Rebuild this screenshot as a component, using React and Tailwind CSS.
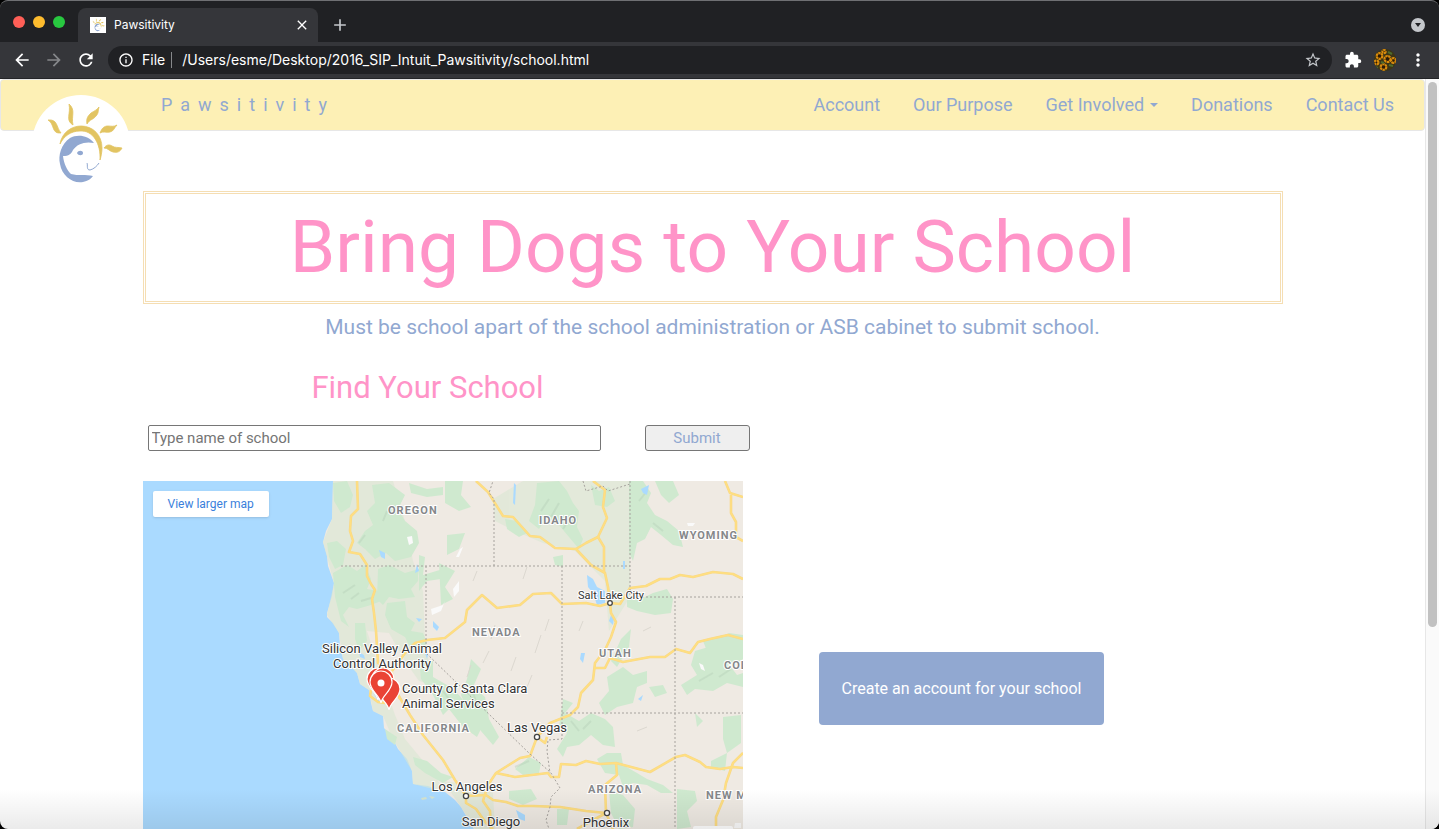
import { MdArrowBack, MdArrowForward, MdRefresh, MdInfoOutline, MdStarBorder, MdExtension, MdMoreVert, MdClose, MdAdd } from "react-icons/md";

function LogoArt() {
  return (
    <>
      <g fill="#e2c462" stroke="#e2c462" strokeWidth="0.8" strokeLinejoin="round">
        <path d="M29 50C31 38 41 32 50 32C62 32 71 41 71 54C71 58 70 63 69 66C70 50 62 36 49 37C40 37 33 42 29 50Z" />
        <path d="M17 26C27 25 25 33 30 39C20 40 24 30 17 26Z" />
        <path d="M38 10C45 16 40 22 42 31C34 26 40 20 38 10Z" />
        <path d="M68 13C67 16 68 19 65 22C62 26 59 25 56 30C55 24 57 22 60 19C63 17 66 16 68 13Z" />
        <path d="M86 31C83 34 83 37 79 38C75 39 72 37 69 39C71 34 73 32 77 32C80 32 83 33 86 31Z" />
        <path d="M91 54C87 53 84 54 81 52C78 50 75 51 73 54C77 54 78 57 82 58C86 59 89 58 91 54Z" />
      </g>
      <g fill="#91a8d1">
        <path d="M63 49C57 41 46 40 39 44C30 50 27 62 29 70C31 82 42 90 52 88C57 87 60 85 62 82C55 80 47 82 40 80C36 76 33 70 32 62C38 62 40 60 42 56C46 50 54 47 63 49Z" />
        <path d="M46 59C47 56 52 56 52 59C52 62 47 62 46 59Z" />
      </g>
      <path d="M56 69C57 71 55 76 59 76C63 75 66 72 68 69" fill="none" stroke="#91a8d1" strokeWidth="1" />
    </>
  );
}

function BrowserChrome() {
  return (
    <header className="shrink-0 rounded-t-lg border-t border-[#6f7073] bg-[#202124] font-[Inter,sans-serif] text-white">
      <div className="flex h-[41px] items-end pr-[14px]">
        <div className="flex gap-2 self-center px-[13px]">
          <span className="size-3 rounded-full bg-[#ff5f57]" />
          <span className="size-3 rounded-full bg-[#febc2e]" />
          <span className="size-3 rounded-full bg-[#28c840]" />
        </div>
        <div className="flex h-[34px] w-60 items-center rounded-t-lg bg-[#35363a] px-3 text-xs">
          <svg viewBox="0 0 100 100" className="mr-2 size-4 bg-white"><LogoArt /></svg>
          <span className="flex-1">Pawsitivity</span>
          <button aria-label="Close tab"><MdClose className="-mr-1 size-4" /></button>
        </div>
        <button aria-label="New tab" className="ml-3 flex h-[34px] items-center text-[#c4c7cb]"><MdAdd className="size-5" /></button>
        <button aria-label="Search tabs" className="mb-[10px] ml-auto flex size-[14px] items-center justify-center rounded-full bg-[#c4c7cb]">
          <svg viewBox="0 0 8 6" className="w-2"><path d="M1 1h6L4 5Z" fill="#202124" /></svg>
        </button>
      </div>
      <div className="flex h-[37px] items-center gap-3 border-b border-[#242528] bg-[#35363a] pr-[15px] pl-3">
        <button aria-label="Back"><MdArrowBack className="size-5" /></button>
        <button aria-label="Forward" className="text-[#86888b]"><MdArrowForward className="size-5" /></button>
        <button aria-label="Reload"><MdRefresh className="size-5" /></button>
        <div className="flex h-7 flex-1 items-center rounded-full bg-[#202124] px-[10px] text-sm">
          <MdInfoOutline className="size-4" />
          <span className="ml-2 border-r border-[#86888b] pr-[6px] leading-4">File</span>
          <input aria-label="Address" defaultValue="/Users/esme/Desktop/2016_SIP_Intuit_Pawsitivity/school.html" className="ml-[10px] min-w-0 flex-1 bg-transparent outline-none" />
          <button aria-label="Bookmark"><MdStarBorder className="size-[18px] text-[#c4c7cb]" /></button>
        </div>
        <button aria-label="Extensions"><MdExtension className="size-[18px]" /></button>
        <button aria-label="Profile">
          <svg viewBox="0 0 22 22" className="size-[22px] rounded-full bg-[#3d3516]">
            <g fill="#2b1a07" stroke="#d98b0c" strokeWidth="2.2" strokeDasharray="2.4 0.5">
              <circle cx="5.5" cy="7" r="2.8" />
              <circle cx="13.5" cy="10" r="3" />
              <circle cx="9.5" cy="18" r="2.8" />
              <circle cx="19.5" cy="11.5" r="2.4" />
              <circle cx="2.5" cy="13.5" r="2" />
              <circle cx="10" cy="2.5" r="1.6" />
            </g>
            <path d="M14 3l4 2M7 13l3 1M15 16l4 1M1 18l3 1" stroke="#4f6b2c" strokeWidth="2" />
          </svg>
        </button>
        <button aria-label="Menu" className="-mr-1"><MdMoreVert className="size-5" /></button>
      </div>
    </header>
  );
}

const forests = [
  "190,2 204,0 210,14 207,26 198,32 191,20",
  "229,4 246,2 262,14 255,28 262,40 274,50 276,62 268,76 252,80 243,72 232,78 222,68 214,62 222,50 230,44 224,30 232,22",
  "184,62 194,60 203,68 200,84 192,88 186,76",
  "190,92 204,84 214,90 222,84 228,98 224,108 236,110 238,120 228,124 214,128 206,126 200,134 206,146 198,140 192,116",
  "235,88 246,84 262,92 276,88 275,100 268,108 272,116 256,118 246,116 240,124 234,118",
  "244,122 262,120 264,136 272,142 268,150 280,152 284,162 276,172 268,168 262,156 248,148 242,134",
  "212,142 222,142 224,160 216,170 212,158",
  "266,2 284,8 300,6 300,14 284,16 268,12",
  "276,74 282,76 280,94 300,88 298,98 284,100 276,110",
  "276,178 290,180 290,196 304,204 316,214 330,232 338,248 334,256 320,246 306,228 300,234 290,214 278,198",
  "296,82 312,90 302,106 310,118 298,124",
  "302,0 320,0 318,14 328,26 316,30 302,22",
  "304,54 322,52 316,68 304,74",
  "394,2 416,0 424,10 430,22 436,30 434,46 440,58 436,68 426,56 416,44 404,36 396,48 386,40 392,24",
  "448,4 456,10 466,6 472,20 464,26 452,24",
  "486,0 500,0 508,12 504,22 512,34 524,40 536,50 540,66 530,64 518,54 508,46 502,58 494,62 490,80 486,72",
  "512,0 530,0 536,14 526,22 518,14",
  "410,76 420,74 420,86 412,84",
  "484,118 498,118 510,112 524,108 530,118 528,132 512,134 494,130 484,126",
  "478,158 488,148 486,166 474,186 468,180",
  "464,196 480,186 490,194 504,190 504,202 494,206 490,222 474,226 462,234 456,222 466,210",
  "506,206 520,204 524,212 512,216",
  "552,170 572,164 586,152 600,154 600,178 588,186 594,194 600,192 600,206 584,202 570,210 552,208 544,214 538,204 554,194 548,184",
  "560,160 580,154 584,162 564,170",
  "420,218 430,222 422,232 436,240 448,232 462,238 470,246 472,266 460,264 448,254 436,264 424,266 420,276 414,268 424,252 416,246",
  "372,288 386,276 398,282 396,292 380,294",
  "454,278 464,272 478,272 480,284 494,292 504,298 520,304 530,312 518,312 504,304 490,302 480,306 476,294 462,292",
  "466,310 480,314 492,328 490,346 476,348 468,332",
  "534,308 552,310 554,320 544,330 548,346 534,348",
  "414,328 426,328 424,344 414,344",
  "580,236 598,234 598,262 584,272 580,258",
  "568,280 584,272 582,290 568,286",
  "328,178 338,188 330,206 342,216 346,238 356,256 350,264 338,250 326,232 318,214 324,198",
  "242,248 254,256 252,264 244,258",
  "270,276 284,280 298,292 310,296 300,302 282,292 272,284",
  "366,310 388,308 394,318 380,324 366,318",
  "552,232 560,240 554,246",
  "362,38 374,40 384,52 376,56 364,48",
];

const lakes = [
  "444,94 450,98 454,106 462,110 462,122 454,124 450,112 445,106",
  "236,69 242,72 242,78 238,76",
  "274,83 276,90 272,92",
  "290,140 296,146 294,150 290,146",
  "498,8 506,4 504,14 500,12",
  "468,134 471,136 470,144 466,140",
  "438,172 442,172 440,182 437,178",
  "373,329 382,334 382,340 376,338",
  "480,80 482,80 482,88 480,88",
  "282,172 285,173 284,178",
  "216,171 221,174 222,178 217,176",
  "273,137 279,138 276,141",
  "371,2 373,4 372,24 370,22",
  "495,218 500,214 498,220",
  "229,209 233,211 238,219 235,220",
];

const salt = [
  "310,108 316,100 316,110 311,116",
  "288,128 300,124 302,120 298,130 289,134",
  "264,56 269,55 270,62 266,64",
  "317,68 320,66 316,76 313,76",
  "544,42 552,42 550,45 545,45",
  "556,182 560,184 562,190 558,188",
  "592,342 598,342 598,347 591,347",
];

const roads = [
  "214,0 215,28 208,35 207,50 210,60 206,71 217,73 224,84 224,95 228,103 232,109 229,118 231,132 233,150 235,182 249,192 254,212 267,234 280,254 300,279 312,299 323,315",
  "249,190 262,172 272,162 284,159 302,157 322,141 324,129 339,114 354,127 377,124 390,113 408,112 419,123 443,122 457,125 467,122 477,123 487,107 503,105 517,98 527,98 537,94 550,96 570,91 590,93 600,98",
  "333,0 345,11 360,35 370,36 387,55 397,56 412,67 433,68 448,84 462,92 465,106 467,122 468,132 473,141 468,156 462,169 452,182 450,199 438,212 435,226 427,234 407,242 394,256 387,275 377,277 353,292 347,301 342,313",
  "433,68 443,62 455,56 464,37 460,26 462,9 450,0",
  "455,56 461,66 461,92",
  "452,187 462,187 467,177 480,181 507,176 522,176 533,168 547,172 555,161 567,158 585,154 600,158",
  "353,292 372,296 405,292 408,296 416,296 418,283 433,284 443,280 457,283 473,282 507,291 533,276 542,274 557,281 563,286 577,288 590,286 600,287",
  "473,282 474,294 462,304 463,332 434,348",
  "323,315 343,314 350,319 363,321 375,325 390,325 417,326 443,330 463,332 470,348",
  "323,315 323,322 333,328 343,342 350,348",
  "342,313 340,320 347,330 348,348",
  "394,256 402,262 404,256",
  "600,272 590,282 583,302 580,319 573,336 573,348",
  "582,0 587,12 600,16",
  "588,14 588,32 593,41 593,56 600,60",
  "228,209 227,215 235,221 242,222",
  "239,191 249,202 257,218",
];

const borders = [
  "198,85 487,85",
  "283,85 283,172 387,273 408,292 417,307 408,316 407,326 403,339 406,348",
  "351,85 351,18 346,12 350,0",
  "419,85 419,258 405,259 404,270 407,292",
  "419,232 600,232",
  "532,116 532,348",
  "487,0 487,116 600,116",
  "440,0 443,10 460,5 465,10 487,3",
];

const stateNames = [
  ["OREGON", 245, 33],
  ["IDAHO", 396, 43],
  ["WYOMING", 536, 58],
  ["NEVADA", 329, 155],
  ["UTAH", 456, 176],
  ["COLORADO", 581, 188],
  ["CALIFORNIA", 254, 251],
  ["ARIZONA", 445, 312],
  ["NEW MEXICO", 563, 318],
];

const cities = [
  ["Las Vegas", 394, 251, 394, 256],
  ["Los Angeles", 324, 310, 323, 315],
  ["San Diego", 348, 345, null, null],
  ["Phoenix", 463, 346, 464, 332],
];

function Pin({ x, y }) {
  return (
    <path
      d="M0 0C-1-8-11-12-11-21A11 11 0 0 1 11-21C11-12 1-8 0 0Z"
      transform={`translate(${x} ${y})`}
      fill="#ea4335"
      stroke="#fff"
      strokeWidth="1.2"
    />
  );
}

function SchoolMap() {
  return (
    <div className="relative w-[600px] max-w-full">
      <svg viewBox="0 0 600 450" className="block w-full bg-[#aadaff] font-[Roboto,sans-serif]" role="img" aria-label="Map of animal services">
        <path
          d="M190 0L189 38L183 50L180 61L184 75L185 85L191 102L189 115L184 132L184 136L190 142L196 152L197 165L200 178L207 184L214 192L217 203L226 209L228 222L230 230L240 235L241 247L250 258L255 268L264 278L269 290L270 303L285 305L302 311L312 319L318 326L325 338L332 350L345 450H600V0Z"
          fill="#efeae3"
        />
        <g fill="#dbe8d3" opacity="0.6">
          <path d="M190 0L189 38L180 61L191 102L184 134L196 152L200 178L214 192L217 203L226 209L230 230L240 235L250 258L269 290L270 303L302 311L290 292L262 258L252 234L240 200L224 150L246 152L262 180L276 200L290 204L282 160L280 110L270 80L262 40L250 0Z" />
          <path d="M350 18L380 0H487V116L466 150L462 100L432 70L400 62L372 50L352 40Z" />
          <path d="M300 300L330 304L350 312L352 348H332L318 326Z" />
        </g>
        <g fill="#cfe9cf">{forests.map((p) => <polygon key={p} points={p} />)}</g>
        <g fill="none" stroke="#b5cdb6" strokeWidth="2" opacity="0.4">
          <path d="M200 112l12-8M208 118l8-6M218 120l10-3M398 30l8-12M408 36l8-14M420 48l6-10M496 20l8-10M510 42l10 8M300 210l12 16M330 212l6 16M556 200l14-8M576 196l12-8M428 240l8 10M440 248l8-8M372 286l14-6M216 62l6-8M240 40l4-10" />
        </g>
        <g fill="none" stroke="#dcd8d0" strokeWidth="1">
          <path d="M348 158l4-14M340 182l6-12M392 172l6-18M324 196l4-12M368 190l5-14M402 150l4-12M384 206l5-12M330 100l4-10M380 98l4-12M436 150l4-10M500 150l8-4M494 250l10-4" />
        </g>
        <g fill="#fafafa">{salt.map((p) => <polygon key={p} points={p} />)}</g>
        <g fill="#aadaff">{lakes.map((p) => <polygon key={p} points={p} />)}</g>
        <g fill="#d5e4d0"><path d="M278 317l5-1 1 2-5 1ZM286 315l6 1-3 2Z" /></g>
        <g fill="none" stroke="#f8d888" strokeWidth="2.6" strokeLinejoin="round">{roads.map((p) => <polyline key={p} points={p} />)}</g>
        <g fill="none" stroke="#ffdf80" strokeWidth="1.4" strokeLinejoin="round">{roads.map((p) => <polyline key={p} points={p} />)}</g>
        <g fill="none" stroke="#a6a29d" strokeWidth="1" strokeDasharray="2 2">{borders.map((p) => <polyline key={p} points={p} />)}</g>

        <g fill="#85878a" stroke="#fff" strokeWidth="2" paintOrder="stroke" className="text-[11px] font-bold tracking-[1px]">
          {stateNames.map(([name, x, y]) => <text key={name} x={x} y={y}>{name}</text>)}
        </g>
        <Pin x={235} y={219} />
        <Pin x={240} y={219} />
        <Pin x={246} y={229} />
        <Pin x={238} y={222} />
        <circle cx="238" cy="202" r="3.5" fill="#fff" />
        <g fill="#333" stroke="#fff" strokeWidth="2" paintOrder="stroke" className="text-[13px]">
          <text x="468" y="118" textAnchor="middle" className="text-[11px]">Salt Lake City</text>
          {cities.map(([name, x, y]) => <text key={name} x={x} y={y} textAnchor="middle">{name}</text>)}
          <text x="239" y="172" textAnchor="middle">Silicon Valley Animal</text>
          <text x="239" y="187" textAnchor="middle">Control Authority</text>
          <text x="259" y="212">County of Santa Clara</text>
          <text x="259" y="227">Animal Services</text>
        </g>
        <g fill="#fff" stroke="#444" strokeWidth="1.3">
          <circle cx="467" cy="122" r="2.3" />
          {cities.filter((c) => c[3]).map(([name, , , cx, cy]) => <circle key={name} cx={cx} cy={cy} r="2.6" />)}
        </g>
        <rect x="550" y="345" width="40" height="80" rx="2" fill="#fff" />
      </svg>
      <a href="#map" className="absolute top-[10px] left-[10px] rounded-xs bg-white px-[15px] py-[5px] font-[Roboto,sans-serif] text-xs text-[#3a7fdc] shadow">
        View larger map
      </a>
    </div>
  );
}

function NavBar() {
  return (
    <nav className="relative flex h-[52px] items-center justify-between rounded border border-[#e7e7e7] bg-[#fdf0b5] pr-[30px] pl-40 text-lg text-[#91a8d1]">
      <a href="#home" aria-label="Home" className="absolute top-[14px] left-[30px] z-10">
        <svg viewBox="0 0 100 100" className="size-[100px]">
          <circle cx="50" cy="50" r="49" fill="#fff" />
          <LogoArt />
        </svg>
      </a>
      <a href="#home" className="tracking-[8px]">Pawsitivity</a>
      <div className="flex items-center gap-[33px]">
        <a href="#account">Account</a>
        <a href="#purpose">Our Purpose</a>
        <a href="#involved" className="flex items-center gap-[6px]">
          Get Involved
          <svg viewBox="0 0 8 4" className="w-2"><path d="M0 0h8L4 4Z" fill="#91a8d1" /></svg>
        </a>
        <a href="#donations">Donations</a>
        <a href="#contact">Contact Us</a>
      </div>
    </nav>
  );
}

export default function App() {
  return (
    <div className="flex h-screen flex-col overflow-hidden bg-black font-[Roboto,sans-serif]">
      <BrowserChrome />
      <div className="relative flex min-h-0 flex-1 overflow-hidden rounded-b-lg bg-white">
        <div className="min-w-0 flex-1 overflow-hidden">
          <NavBar />
          <main className="mx-auto mt-[60px] max-w-[1140px]">
            <h1 className="border-[3px] border-double border-[#f5deb3] py-[9px] text-center text-[73px] leading-[89px] text-[#ff94c8]">
              Bring Dogs to Your School
            </h1>
            <p className="mt-2 text-center text-[21px] leading-[30px] text-[#91a8d1]">
              Must be school apart of the school administration or ASB cabinet to submit school.
            </p>
            <h2 className="mt-[26px] w-1/2 text-center text-[31px] leading-10 text-[#ff94c8]">Find Your School</h2>
            <form className="mt-[17px] flex gap-11 pl-[5px] text-[15px]" onSubmit={(e) => e.preventDefault()}>
              <input
                type="text"
                aria-label="School name"
                placeholder="Type name of school"
                className="h-[26px] w-[453px] rounded-xs border border-[#767676] bg-white px-[3px] placeholder:text-[#757575]"
              />
              <button type="submit" className="h-[26px] w-[105px] rounded-[3px] border border-[#767676] bg-[#efefef] text-[#91a8d1]">Submit</button>
            </form>
            <div className="mt-[30px] flex items-start gap-[76px]">
              <SchoolMap />
              <button className="mt-[171px] rounded bg-[#91a8d1] px-[23px] py-6 text-base leading-[25px] text-white">
                Create an account for your school
              </button>
            </div>
          </main>
        </div>
        <div className="w-[14px] shrink-0 border-l border-[#e7e7e7] bg-[#fafafa] px-[2px] pt-[3px]">
          <div className="h-[73%] rounded-full bg-[#c1c1c1]" />
        </div>
        <div className="pointer-events-none absolute inset-x-0 bottom-0 h-10 bg-linear-to-t from-black/8 to-transparent" />
      </div>
    </div>
  );
}
